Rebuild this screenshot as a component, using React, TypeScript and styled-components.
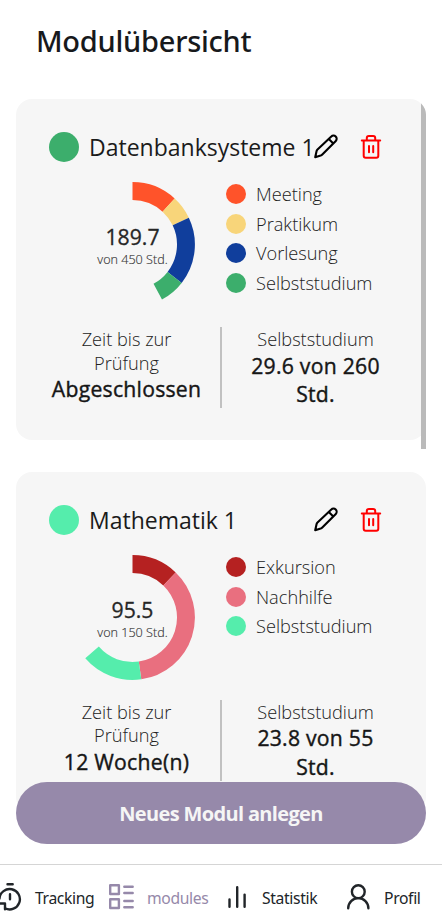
import React from "react";
import styled, { createGlobalStyle } from "styled-components";

const GlobalStyle = createGlobalStyle`
  *, *::before, *::after { box-sizing: border-box; }
  body {
    margin: 0;
    overflow: hidden;
    background: #fff;
    color: #1b1b1b;
    font-family: "Open Sans", "Noto Sans", sans-serif;
  }
`;

const Page = styled.div`
  display: flex;
  flex-direction: column;
  height: 920px;
  width: 442px;
  overflow: hidden;
`;

const Title = styled.h1`
  flex: none;
  margin: 0;
  height: 99px;
  padding: 20px 0 0 36px;
  font: 500 29px/42px "Noto Sans", "Open Sans", sans-serif;
  letter-spacing: -0.25px;
  color: #17191c;
`;

const ModuleList = styled.main`
  position: relative;
  flex: none;
  height: 683px;
  margin: 0 16px;
  display: flex;
  flex-direction: column;
  gap: 31.6px;
`;

const ScrollClip = styled.div`
  position: absolute;
  inset: 0;
  border-top-right-radius: 16px;
  overflow: hidden;
  pointer-events: none;
`;

const ScrollThumb = styled.div`
  width: 5px;
  height: 350px;
  margin-left: auto;
  background: #bababa;
`;

const Card = styled.article`
  flex: none;
  height: 341.2px;
  padding: 33px 33px 0;
  border-radius: 16px;
  background: #f6f6f6;
`;

const CardHeader = styled.header`
  display: flex;
  align-items: center;
  height: 30px;
`;

const Dot = styled.span<{ $size: number; $color: string }>`
  flex: none;
  width: ${(p) => p.$size}px;
  height: ${(p) => p.$size}px;
  border-radius: 50%;
  background: ${(p) => p.$color};
`;

const ModuleName = styled.h2`
  flex: none;
  width: 224px;
  margin: 0 0 0.2px 10px;
  font-size: 23px;
  font-weight: 400;
  line-height: 30px;
  white-space: nowrap;
`;

const IconButton = styled.button`
  flex: none;
  display: flex;
  width: 26px;
  height: 26px;
  margin: 0;
  padding: 0;
  border: 0;
  background: none;

  & + & {
    margin-left: 19px;
  }
`;

const Overview = styled.div`
  display: flex;
  height: 165px;
  padding: 20px 0 0 21px;
`;

const ChartBox = styled.div`
  display: grid;
  flex: none;
  width: 125px;
  height: 125px;
  > * { grid-area: 1 / 1; }
`;

const ChartLabel = styled.div`
  padding-top: 41px;
  text-align: center;
  white-space: nowrap;
`;

const Hours = styled.div`
  margin-bottom: 1px;
  font-size: 21.2px;
  font-weight: 400;
  line-height: 27px;
  -webkit-text-stroke: 0.3px currentColor;
  color: #262626;
`;

const TotalHours = styled.div`
  font-size: 12.6px;
  font-weight: 300;
  line-height: 17px;
  -webkit-text-stroke: 0.15px currentColor;
  color: #333;
`;

const Legend = styled.ul`
  margin: 1px 0 0 31px;
  padding: 0;
  list-style: none;
`;

const LegendItem = styled.li`
  display: flex;
  align-items: center;
  gap: 10px;
  height: 29.6px;
  padding-bottom: 7px;
  font-size: 18.2px;
  font-weight: 300;
  white-space: nowrap;
  color: #222;
`;

const Stats = styled.div`
  display: grid;
  grid-template-columns: 155px 2px 155px;
  column-gap: 16px;
  height: 81px;
  text-align: center;
`;

const Divider = styled.div`
  background: #c1c1c1;
`;

const StatsCell = styled.div`
  padding-top: 1px;
`;

const StatName = styled.div`
  font-size: 18.2px;
  font-weight: 300;
  line-height: 23.6px;
  color: #222;
`;

const StatValue = styled.div`
  font-size: 21.2px;
  font-weight: 400;
  line-height: 28.2px;
  letter-spacing: 0.25px;
  -webkit-text-stroke: 0.4px currentColor;
  color: #161616;
`;

const CreateButton = styled.button`
  position: relative;
  flex: none;
  height: 62px;
  margin: 0 16px;
  padding: 2px 0 0;
  border: 0;
  border-radius: 31px;
  background: #9689aa;
  color: #f5f5f5;
  font: 700 20px/28px "Open Sans", sans-serif;
  letter-spacing: -0.65px;
`;

const TabBar = styled.nav`
  display: flex;
  flex: none;
  height: 56px;
  margin-top: 20px;
  padding-top: 17px;
  border-top: 1px solid #d5d5d5;
`;

const Tab = styled.a<{ $width: number; $active?: boolean }>`
  display: flex;
  flex: none;
  width: ${(p) => p.$width}px;
  color: ${(p) => (p.$active ? "#9689aa" : "#212529")};
  font: 400 15.7px/32px "Noto Sans", sans-serif;
  letter-spacing: -0.35px;
  white-space: nowrap;
`;

const TabText = styled.span<{ $gap: number }>`
  margin-left: ${(p) => p.$gap}px;
`;

const TabIcon = styled.svg`
  flex: none;
  display: block;
  fill: none;
  stroke: currentColor;
  stroke-width: 2.4;
  stroke-linecap: round;
  stroke-linejoin: round;
`;

type Segment = { name: string; color: string; end: number };
type Module = {
  name: string; color: string; hours: string; total: string;
  segments: Segment[]; exam: string; study: string;
};

const modules: Module[] = [
  {
    name: "Datenbanksysteme 1", color: "#3cae6c", hours: "189.7", total: "von 450 Std.",
    exam: "Abgeschlossen", study: "29.6 von 260 Std.",
    segments: [
      { name: "Meeting", color: "#ff532a", end: 42.5 },
      { name: "Praktikum", color: "#f8d57a", end: 64.5 },
      { name: "Vorlesung", color: "#103e9c", end: 128 },
      { name: "Selbststudium", color: "#3cae6c", end: 151.8 },
    ],
  },
  {
    name: "Mathematik 1", color: "#55edac", hours: "95.5", total: "von 150 Std.",
    exam: "12 Woche(n)", study: "23.8 von 55 Std.",
    segments: [
      { name: "Exkursion", color: "#b52121", end: 43.8 },
      { name: "Nachhilfe", color: "#e96f7f", end: 171.9 },
      { name: "Selbststudium", color: "#55edac", end: 229.2 },
    ],
  },
];

const point = (radius: number, degrees: number) => {
  const a = (degrees * Math.PI) / 180;
  return `${62.5 + radius * Math.sin(a)} ${62.5 - radius * Math.cos(a)}`;
};

function Donut({ segments }: { segments: Segment[] }) {
  return (
    <svg width="125" height="125" viewBox="0 0 125 125">
      {segments.map((s, i) => {
        const start = i ? segments[i - 1].end : 0;
        return (
          <path
            key={s.name}
            fill={s.color}
            d={`M${point(62.4, start)}A62.4 62.4 0 0 1 ${point(62.4, s.end)}L${point(44.5, s.end)}A44.5 44.5 0 0 0 ${point(44.5, start)}Z`}
          />
        );
      })}
    </svg>
  );
}

const Pencil = () => (
  <svg width="26" height="26" viewBox="0 0 26 26" fill="none" stroke="#000" strokeWidth="2.1" strokeLinecap="round" strokeLinejoin="round">
    <path d="M2.2 23.2l1.4-6.1Q3.8 16.2 4.5 15.5L18.3 2.6a3.1 3.1 0 0 1 4.5 4.3L9.3 20.6Q8.6 21.3 7.7 21.6zM15.8 5l4.5 4.4" />
  </svg>
);

const Trash = () => (
  <svg width="26" height="26" viewBox="0 0 26 26" fill="none" stroke="red" strokeWidth="2" strokeLinecap="round" strokeLinejoin="round">
    <path d="M3.8 6.6h18.4M5.7 6.6v15.1q0 2 2 2h10.6q2 0 2-2V6.6M8.8 6.6V4q0-2 2-2h4.4q2 0 2 2v2.6M11 11.9v6.4M15.2 11.9v6.4" />
  </svg>
);

function ModuleCard({ module: m }: { module: Module }) {
  return (
    <Card>
      <CardHeader>
        <Dot $size={30} $color={m.color} />
        <ModuleName>{m.name}</ModuleName>
        <IconButton aria-label="Bearbeiten"><Pencil /></IconButton>
        <IconButton aria-label="Löschen"><Trash /></IconButton>
      </CardHeader>
      <Overview>
        <ChartBox>
          <Donut segments={m.segments} />
          <ChartLabel>
            <Hours>{m.hours}</Hours>
            <TotalHours>{m.total}</TotalHours>
          </ChartLabel>
        </ChartBox>
        <Legend>
          {m.segments.map((s) => (
            <LegendItem key={s.name}><Dot $size={20} $color={s.color} />{s.name}</LegendItem>
          ))}
        </Legend>
      </Overview>
      <Stats>
        <StatsCell>
          <StatName>Zeit bis zur<br />Prüfung</StatName>
          <StatValue>{m.exam}</StatValue>
        </StatsCell>
        <Divider />
        <StatsCell>
          <StatName>Selbststudium</StatName>
          <StatValue>{m.study}</StatValue>
        </StatsCell>
      </Stats>
    </Card>
  );
}

export default function App() {
  return (
    <Page>
      <GlobalStyle />
      <Title>Modulübersicht</Title>
      <ModuleList>
        {modules.map((m) => <ModuleCard key={m.name} module={m} />)}
        <ScrollClip><ScrollThumb /></ScrollClip>
      </ModuleList>
      <CreateButton>Neues Modul anlegen</CreateButton>
      <TabBar>
        <Tab $width={108}>
          <TabIcon width="22" height="32" viewBox="0 0 22 32">
            <path d="M7.5 2.3h5.2M10 12.3v4.9M-.5 16.5A10.2 10.2 0 1 1 5 26.3M-1 21.5H5V27.3" />
          </TabIcon>
          <TabText $gap={13}>Tracking</TabText>
        </Tab>
        <Tab $width={119} $active>
          <TabIcon width="28" height="32" viewBox="0 0 28 32">
            <path d="M2.2 3.3h8.7V12H2.2zM2.2 17.3h8.7V26H2.2zM16.3 4.8h8.4M16.3 11h8.4M16.3 19h8.4M16.3 25.2h8.4" />
          </TabIcon>
          <TabText $gap={11}>modules</TabText>
        </Tab>
        <Tab $width={118}>
          <TabIcon width="20" height="32" viewBox="0 0 20 32">
            <path d="M2.5 17.5v7.3M10.2 5.3v19.5M17.6 12.6v12.2" />
          </TabIcon>
          <TabText $gap={15}>Statistik</TabText>
        </Tab>
        <Tab $width={97}>
          <TabIcon width="26" height="32" viewBox="0 0 26 32">
            <circle cx="13.3" cy="9.7" r="6.4" />
            <path d="M3.2 26.2a10.1 10.1 0 0 1 20.2 0" />
          </TabIcon>
          <TabText $gap={13}>Profil</TabText>
        </Tab>
      </TabBar>
    </Page>
  );
}
